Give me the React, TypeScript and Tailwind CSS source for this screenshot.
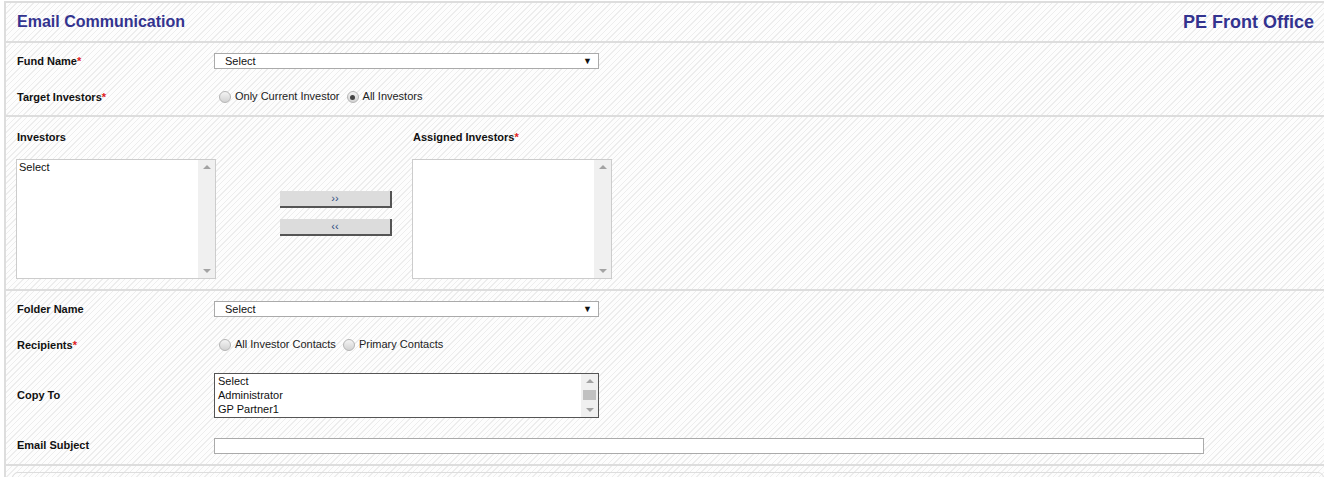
import React from 'react';

const stripes =
  'bg-[repeating-linear-gradient(135deg,#fdfdfd_0px,#fdfdfd_3px,#ededed_3px,#ededed_4px)]';

function Req() {
  return <span className="text-[#e02020]">*</span>;
}

function Label({ children }: { children: React.ReactNode }) {
  return (
    <div className="w-[208px] shrink-0 pl-[11px] font-bold text-[11px] text-[#111]">
      {children}
    </div>
  );
}

function FakeSelect() {
  return (
    <div className="flex h-[16px] w-[385px] items-center justify-between border border-[#aaa] bg-white pl-[10px] pr-[6px] text-[11px] text-[#111]">
      <span>Select</span>
      <span className="text-[9px] leading-none">▼</span>
    </div>
  );
}

function Radio({ checked, label }: { checked?: boolean; label: string }) {
  return (
    <label className="mr-[7px] flex items-center gap-[4px] text-[11px] text-[#222]">
      <span className="flex h-[12px] w-[12px] items-center justify-center rounded-full border border-[#b5b5b5] bg-[linear-gradient(#f4f4f4,#d2d2d2)]">
        {checked && <span className="h-[5px] w-[5px] rounded-full bg-[#444]" />}
      </span>
      <span className="-mt-[2px]">{label}</span>
    </label>
  );
}

function Scrollbar({ thumb }: { thumb?: boolean }) {
  return (
    <div className="flex h-full w-[17px] flex-col items-center justify-between bg-[#f0f0f0] py-[5px]">
      <span className="h-0 w-0 border-x-[4px] border-b-[4px] border-x-transparent border-b-[#a3a3a3]" />
      {thumb && <span className="h-[10px] w-[13px] bg-[#c1c1c1]" />}
      <span className="h-0 w-0 border-x-[4px] border-t-[4px] border-x-transparent border-t-[#a3a3a3]" />
    </div>
  );
}

function ListBox({ items }: { items: string[] }) {
  return (
    <div className="flex h-[120px] w-[200px] border border-[#cccccc] bg-white">
      <div className="flex-1 pl-[2px] pt-[1px] text-[11px] leading-[13px] text-[#111]">
        {items.map((i) => (
          <div key={i}>{i}</div>
        ))}
      </div>
      <Scrollbar />
    </div>
  );
}

function MoveButton({ children }: { children: React.ReactNode }) {
  return (
    <button className="flex h-[17px] w-[112px] items-center justify-center border-b-2 border-r-2 border-[#555] bg-[#dcdcdc] text-[11px] leading-none text-[#2a4a80]">
      {children}
    </button>
  );
}

export default function App() {
  return (
    <div
      className={`ml-[4px] mt-[1px] min-h-[476px] border-l-2 border-t-2 border-[#dddddd] ${stripes} font-['Liberation_Sans',Arial,sans-serif]`}
    >
      {/* Header */}
      <div className="flex h-[40px] items-center justify-between border-b-2 border-[#dddddd] pl-[11px] pr-[10px]">
        <h1 className="text-[16px] font-bold text-[#33338f]">Email Communication</h1>
        <div className="text-[18px] font-bold text-[#33338f]">PE Front Office</div>
      </div>

      {/* Fund / target */}
      <div className="border-b-2 border-[#dddddd]">
        <div className="flex h-[36px] items-center">
          <Label>
            Fund Name<Req />
          </Label>
          <FakeSelect />
        </div>
        <div className="flex h-[36px] items-center">
          <Label>
            Target Investors<Req />
          </Label>
          <div className="flex items-center pl-[5px]">
            <Radio label="Only Current Investor" />
            <Radio checked label="All Investors" />
          </div>
        </div>
      </div>

      {/* Investors picker */}
      <div className="flex border-b-2 border-[#dddddd] pb-[10px] pl-[10px] pt-[14px]">
        <div className="flex flex-col">
          <div className="mb-[15px] pl-[1px] text-[11px] font-bold leading-[13px] text-[#111]">
            Investors
          </div>
          <ListBox items={['Select']} />
        </div>
        <div className="flex flex-col gap-[11px] pl-[64px] pr-[20px] pt-[60px]">
          <MoveButton>››</MoveButton>
          <MoveButton>‹‹</MoveButton>
        </div>
        <div className="flex flex-col">
          <div className="mb-[15px] pl-[1px] text-[11px] font-bold leading-[13px] text-[#111]">
            Assigned Investors<Req />
          </div>
          <ListBox items={[]} />
        </div>
      </div>

      {/* Mail details */}
      <div className="border-b-2 border-[#dddddd]">
        <div className="flex h-[36px] items-center">
          <Label>Folder Name</Label>
          <FakeSelect />
        </div>
        <div className="flex h-[36px] items-center">
          <Label>
            Recipients<Req />
          </Label>
          <div className="flex items-center pl-[5px]">
            <Radio label="All Investor Contacts" />
            <Radio label="Primary Contacts" />
          </div>
        </div>
        <div className="flex h-[64px] items-center">
          <Label>Copy To</Label>
          <div className="flex h-[45px] w-[385px] border border-[#555] bg-white">
            <div className="flex-1 pl-[3px] text-[11px] leading-[14px] text-[#111]">
              <div>Select</div>
              <div>Administrator</div>
              <div>GP Partner1</div>
            </div>
            <Scrollbar thumb />
          </div>
        </div>
        <div className="flex h-[37px] items-center">
          <Label>Email Subject</Label>
          <div className="h-[16px] w-[990px] border border-[#aaa] bg-white" />
        </div>
      </div>

      <div className="pl-[6px] pt-[6px]">
        <div className="h-[20px] rounded-tl-[6px] rounded-tr-[6px] border border-[#dddddd]" />
      </div>
    </div>
  );
}
